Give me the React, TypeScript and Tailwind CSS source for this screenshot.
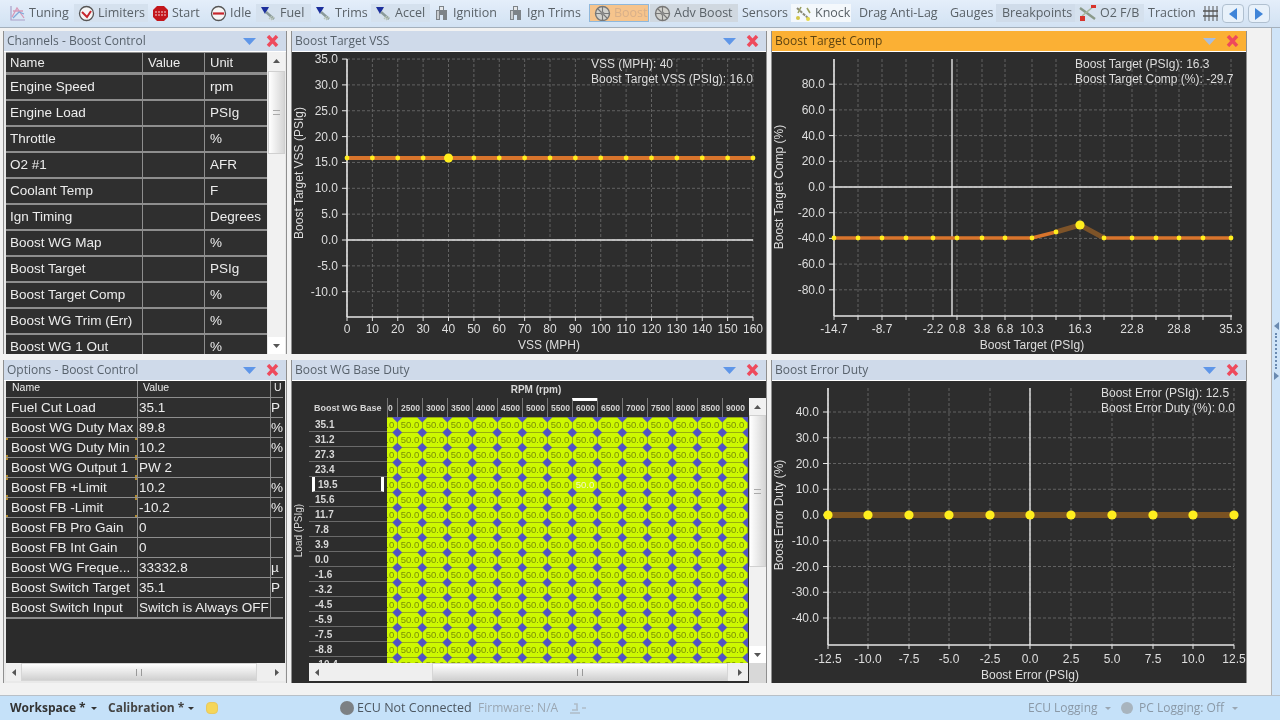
import React from "react";

const sans = "font-['Liberation_Sans',Arial,sans-serif]";
const ui = "font-['Open_Sans','Noto_Sans',sans-serif]";

const Wrench = () => (
  <svg width="17" height="17" viewBox="0 0 17 17">
    <polygon points="1,2 9,2 5,9" fill="#1c2f9c" />
    <path d="M6 7 L14 14" stroke="#8a9a9a" strokeWidth="2.4" />
    <path d="M9 14 L12 11 M11 15 L14 12" stroke="#b8c4b8" strokeWidth="1.2" />
  </svg>
);
const Plug = () => (
  <svg width="16" height="17" viewBox="0 0 16 17">
    <path d="M5 1 H10 V5 H13 V15 H9 V10 H6 V15 H2 V5 H5 Z" fill="#7d8388" />
    <rect x="6" y="2" width="3" height="3" fill="#e6e8ea" />
    <rect x="3" y="6" width="2" height="8" fill="#c8ccd0" />
  </svg>
);
const Turbo = () => (
  <svg width="17" height="17" viewBox="0 0 17 17">
    <circle cx="8.5" cy="8.5" r="7" fill="#d0d0cc" stroke="#777" strokeWidth="1.4" />
    <path d="M8.5 2 V15 M2 8.5 H15 M4 4 L13 13" stroke="#777" strokeWidth="1.1" />
    <circle cx="8.5" cy="8.5" r="2" fill="#888" />
  </svg>
);
const Tuning = () => (
  <svg width="16" height="16" viewBox="0 0 16 16" fill="none">
    <path d="M1 1 V15 H15" stroke="#a9a0c8" strokeWidth="1.2" />
    <path d="M2 12 L7 3 L14 13 M3 6 L13 6" stroke="#d79ab8" strokeWidth="1.3" />
    <path d="M3 13 L9 7 L14 9" stroke="#7fa8d8" strokeWidth="1.3" />
  </svg>
);
const Gauge = () => (
  <svg width="17" height="17" viewBox="0 0 17 17" fill="none">
    <circle cx="8.5" cy="8.5" r="7" fill="#f5f5f5" stroke="#555" strokeWidth="1.3" />
    <path d="M4 7 L9 12 L13 6" stroke="#c7262c" strokeWidth="2" />
  </svg>
);
const Stop = () => (
  <svg width="17" height="17" viewBox="0 0 17 17">
    <polygon points="5,1 12,1 16,5 16,12 12,16 5,16 1,12 1,5" fill="#c3161c" />
    <path d="M3 7 H14 M3 10 H14" stroke="#f4d4d4" strokeWidth="1.2" strokeDasharray="2 1" />
  </svg>
);
const Idle = () => (
  <svg width="17" height="17" viewBox="0 0 17 17" fill="none">
    <circle cx="8.5" cy="8.5" r="7" fill="#f5f5f5" stroke="#555" strokeWidth="1.3" />
    <path d="M3 8.5 H14" stroke="#c7262c" strokeWidth="2.2" />
  </svg>
);
const Knock = () => (
  <svg width="17" height="17" viewBox="0 0 17 17" fill="none">
    <path d="M2 3 L14 14" stroke="#8a8a7a" strokeWidth="2" strokeDasharray="3 1" />
    <path d="M6 2 L3 8 M12 3 L15 8" stroke="#9aa060" strokeWidth="1.6" />
    <circle cx="13" cy="14" r="2" fill="#e4d84a" />
    <circle cx="3" cy="13" r="2" fill="#d4c84a" />
  </svg>
);
const O2Icon = () => (
  <svg width="18" height="18" viewBox="0 0 18 18" fill="none">
    <path d="M1 4 L16 15" stroke="#8a9a8a" strokeWidth="2.4" />
    <path d="M3 12 L15 2" stroke="#a8b8a0" strokeWidth="1.6" />
    <rect x="1" y="12" width="5" height="5" fill="#d8342c" />
    <rect x="12" y="1" width="5" height="3" fill="#d8342c" />
  </svg>
);
const Hatch = () => (
  <svg width="15" height="17" viewBox="0 0 15 17" fill="none" stroke="#555" strokeWidth="1">
    <path d="M2 1 V16 M6 1 V16 M10 1 V16 M14 1 V16" />
    <path d="M0 6 H15 M0 11 H15" strokeWidth="1.4" />
  </svg>
);

type Tool = { t: string; w: number; icon?: React.ReactNode; c?: string; tc?: string };
const tools: Tool[] = [
  { t: "Tuning", w: 68, icon: <Tuning /> },
  { t: "Limiters", w: 74, icon: <Gauge />, c: "bg-[#d5e1ee]" },
  { t: "Start", w: 58, icon: <Stop /> },
  { t: "Idle", w: 50, icon: <Idle /> },
  { t: "Fuel", w: 55, icon: <Wrench />, c: "bg-[#d5e1ee]" },
  { t: "Trims", w: 60, icon: <Wrench /> },
  { t: "Accel", w: 59, icon: <Wrench />, c: "bg-[#d5e1ee]" },
  { t: "Ignition", w: 74, icon: <Plug /> },
  { t: "Ign Trims", w: 85, icon: <Plug /> },
  { t: "Boost", w: 60, icon: <Turbo />, c: "mr-[1px] bg-[#f6c48c] border border-[#8fb8dc]", tc: "text-[#d8b08a]" },
  { t: "Adv Boost", w: 88, icon: <Turbo />, c: "bg-[#d0d8e0]" },
  { t: "Sensors", w: 53 },
  { t: "Knock", w: 60, icon: <Knock />, c: "mr-[4px] bg-[#f4f8fc]" },
  { t: "Drag Anti-Lag", w: 91 },
  { t: "Gauges", w: 50 },
  { t: "Breakpoints", w: 79, c: "bg-[#d0dcea] pl-[6px]" },
  { t: "O2 F/B", w: 69, icon: <O2Icon />, c: "bg-[#d5e1ee]" },
  { t: "Traction", w: 55 },
];

const Toolbar = () => (
  <div className={`h-[28px] flex shrink-0 items-center pl-[6px] bg-gradient-to-b from-[#e4eefa] to-[#d2e2f3] border-b border-[#a4b0bc] ${ui}`}>
    {tools.map((b) => (
      <div
        key={b.t}
        style={{ width: b.w }}
        className={`h-[18px] mt-[-1px] flex items-center gap-[3px] pl-[4px] shrink-0 overflow-hidden whitespace-nowrap text-[12.5px] ${b.c ?? ""} ${b.tc ?? "text-[#5a6268]"}`}
      >
        {b.icon}
        <span>{b.t}</span>
      </div>
    ))}
    <div className="w-[23px] pl-[4px] flex items-center shrink-0"><Hatch /></div>
    <div className="w-[22px] h-[19px] shrink-0 flex items-center justify-center rounded-sm border border-[#b0c0d0] bg-[#e8f1fa]">
      <svg width="8" height="12"><polygon points="8,0 8,12 0,6" fill="#3f84d8" /></svg>
    </div>
    <div className="w-[22px] h-[19px] ml-[4px] shrink-0 flex items-center justify-center rounded-sm border border-[#b0c0d0] bg-[#e8f1fa]">
      <svg width="8" height="12"><polygon points="0,0 0,12 8,6" fill="#3f84d8" /></svg>
    </div>
  </div>
);

const Panel = ({ title, active, children }: { title: string; active?: boolean; children: React.ReactNode }) => (
  <div className="flex flex-col min-w-0 bg-[#e9e9e9] border-l border-r border-[#8f8f8f]">
    <div className={`h-[20px] shrink-0 flex items-center pl-[3px] ${active ? "bg-[#fbb034] text-[#5e4412]" : "bg-[#cfdaea] text-[#58626c]"} ${ui}`}>
      <span className="text-[12px] flex-1 whitespace-nowrap">{title}</span>
      <svg width="13" height="8" className="mr-[10px]">
        <polygon points="0,1 13,1 6.5,8" fill={active ? "#a8bede" : "#5f96e8"} />
      </svg>
      <svg width="13" height="12" className="mr-[7px]" fill="none">
        <path d="M2 1 L11 11 M11 1 L2 11" stroke="#ee4a5c" strokeWidth="3.4" />
      </svg>
    </div>
    <div className="h-px shrink-0 bg-white" />
    <div className="flex-1 min-h-0 relative">{children}</div>
  </div>
);

const VBar = ({ top, height }: { top: number; height: number }) => (
  <div className="w-[17px] h-full shrink-0 flex flex-col bg-[#f1f1f1] items-center">
    <div className="h-[17px] shrink-0 flex items-center justify-center">
      <svg width="7" height="4"><polygon points="0,4 7,4 3.5,0" fill="#555" /></svg>
    </div>
    <div style={{ height: top }} className="shrink-0" />
    <div style={{ height }} className="w-full shrink-0 bg-gradient-to-r from-white to-[#d6d6d6] border border-[#d0d0d0] flex items-center justify-center">
      <div className="w-[7px] h-[5px] border-y border-[#aaa]" />
    </div>
    <div className="flex-1" />
    <div className="h-[17px] w-full shrink-0 flex items-center justify-center bg-white">
      <svg width="7" height="4"><polygon points="0,0 7,0 3.5,4" fill="#555" /></svg>
    </div>
  </div>
);

const HBar = ({ left, width }: { left: number; width: number }) => (
  <div className="h-[18px] w-full flex items-center bg-[#efefef]">
    <div className="w-[15px] shrink-0 flex justify-center">
      <svg width="4" height="7"><polygon points="4,0 4,7 0,3.5" fill="#555" /></svg>
    </div>
    <div style={{ width: left }} className="shrink-0" />
    <div style={{ width }} className="h-full shrink-0 bg-gradient-to-b from-white to-[#d0d0d0] border border-[#d6d6d6] flex items-center justify-center">
      <div className="w-[6px] h-[7px] border-x border-[#999]" />
    </div>
    <div className="flex-1 flex justify-end pr-[6px]">
      <svg width="4" height="7"><polygon points="0,0 0,7 4,3.5" fill="#555" /></svg>
    </div>
  </div>
);

const channels: [string, string][] = [
  ["Engine Speed", "rpm"], ["Engine Load", "PSIg"], ["Throttle", "%"], ["O2 #1", "AFR"], ["Coolant Temp", "F"],
  ["Ign Timing", "Degrees"], ["Boost WG Map", "%"], ["Boost Target", "PSIg"], ["Boost Target Comp", "%"],
  ["Boost WG Trim (Err)", "%"], ["Boost WG 1 Out", "%"],
];

const ChannelsTable = () => (
  <div className={`h-full flex pl-[2px] pr-px overflow-hidden text-[#ececec] text-[13.5px] ${sans}`}>
    <div className="w-[261px] shrink-0 overflow-hidden bg-[#8e8e8e]">
      <div className="h-[19px] mt-px flex gap-px text-[13px] leading-[19px] mb-[3px]">
        <div className="w-[136px] bg-[#2f2f2f] pl-[4px]">Name</div>
        <div className="w-[61px] bg-[#2f2f2f] pl-[5px]">Value</div>
        <div className="w-[62px] bg-[#2f2f2f] pl-[5px]">Unit</div>
      </div>
      {channels.map(([n, u]) => (
        <div key={n} className="h-[24px] mb-[2px] flex gap-px leading-[24px]">
          <div className="w-[136px] bg-[#2f2f2f] pl-[4px] whitespace-nowrap">{n}</div>
          <div className="w-[61px] bg-[#2f2f2f]" />
          <div className="w-[62px] bg-[#2f2f2f] pl-[5px]">{u}</div>
        </div>
      ))}
    </div>
    <div className="ml-[1px]"><VBar top={2} height={83} /></div>
  </div>
);

const options: [string, string, string, boolean?][] = [
  ["Fuel Cut Load", "35.1", "P"], ["Boost WG Duty Max", "89.8", "%"], ["Boost WG Duty Min", "10.2", "%", true],
  ["Boost WG Output 1", "PW 2", "", true], ["Boost FB +Limit", "10.2", "%", true], ["Boost FB -Limit", "-10.2", "%", true],
  ["Boost FB Pro Gain", "0", ""], ["Boost FB Int Gain", "0", ""], ["Boost WG Freque...", "33332.8", "µ"],
  ["Boost Switch Target", "35.1", "P"], ["Boost Switch Input", "Switch is Always OFF", ""],
];

const Corner = ({ c }: { c: string }) => <span className={`absolute w-[2px] h-[2px] bg-[#b08a30] ${c}`} />;

const OptionsTable = () => (
  <div className={`h-full flex flex-col pl-[2px] pr-px text-[#ececec] text-[13.5px] ${sans}`}>
    <div className="flex-1 min-h-0 bg-[#2b2b2b] overflow-hidden">
      <div className="bg-[#8e8e8e] pb-px w-[277px]">
        <div className="h-[16px] flex gap-px text-[10.5px] leading-[13px] mb-px">
          <div className="w-[131px] bg-[#2f2f2f] pl-[6px]">Name</div>
          <div className="w-[132px] bg-[#2f2f2f] pl-[5px]">Value</div>
          <div className="w-[12px] bg-[#2f2f2f] pl-[3px]">U</div>
        </div>
        {options.map(([n, v, u, mark]) => (
          <div key={n} className="h-[19px] mb-px flex gap-px leading-[19px]">
            <div className="w-[131px] bg-[#2f2f2f] pl-[5px] whitespace-nowrap relative">
              {n}
              {mark && (
                <>
                  <Corner c="left-0 top-0" />
                  <Corner c="left-0 bottom-0" />
                  <Corner c="right-0 top-0" />
                  <Corner c="right-0 bottom-0" />
                </>
              )}
            </div>
            <div className="w-[132px] bg-[#2f2f2f] pl-[1px] whitespace-nowrap">{v}</div>
            <div className="w-[12px] bg-[#2f2f2f] overflow-hidden">{u}</div>
          </div>
        ))}
      </div>
    </div>
    <div className="h-[19px] shrink-0 mb-px"><HBar left={0} width={236} /></div>
  </div>
);

type ChartProps = {
  xTicks: { x: number; label?: string }[];
  yTicks: { y: number; label: string }[];
  ax: number; right: number; top: number; bottom: number; zeroY: number; zeroX?: number;
  yLabel: string; yLabelCy: number; yLabelX: number;
  xLabel: string; xLabelCx: number; xLabelY: number; tickY: number;
  info: string[]; infoX: number; infoY: number;
  ox: number; oy: number;
  children: React.ReactNode;
};

const Chart = (p: ChartProps) => (
  <svg width="474" height="302" className={`block bg-[#2d2d2d] ${sans}`} fontSize="12" fill="#dedede">
    <g transform={`translate(${-p.ox},${-p.oy})`}>
      <g stroke="#626262" strokeWidth="1" strokeDasharray="3 2" fill="none">
        {p.xTicks.map((t) => <line key={t.x} x1={t.x} x2={t.x} y1={p.top} y2={p.bottom} />)}
        {p.yTicks.map((t) => <line key={t.y} x1={p.ax} x2={p.right} y1={t.y} y2={t.y} />)}
      </g>
      <g stroke="#e6e6e6" fill="none">
        <line x1={p.ax} x2={p.ax} y1={p.top} y2={p.bottom} strokeWidth="1.6" />
        <line x1={p.ax} x2={p.right} y1={p.bottom} y2={p.bottom} strokeWidth="1.6" />
        <line x1={p.ax} x2={p.right} y1={p.zeroY} y2={p.zeroY} strokeWidth="1.4" />
        {p.zeroX !== undefined && <line x1={p.zeroX} x2={p.zeroX} y1={p.top} y2={p.bottom} strokeWidth="1.4" />}
        {p.xTicks.map((t) => <line key={t.x} x1={t.x} x2={t.x} y1={p.bottom} y2={p.bottom + 4} />)}
        {p.yTicks.map((t) => <line key={t.y} x1={p.ax - 5} x2={p.ax} y1={t.y} y2={t.y} />)}
      </g>
      {p.yTicks.map((t) => (
        <text key={t.y} x={p.ax - 9} y={t.y + 4} textAnchor="end">{t.label}</text>
      ))}
      {p.xTicks.filter((t) => t.label).map((t) => (
        <text key={t.x} x={t.x} y={p.tickY} textAnchor="middle">{t.label}</text>
      ))}
      <text x={p.xLabelCx} y={p.xLabelY} textAnchor="middle">{p.xLabel}</text>
      <text transform={`translate(${p.yLabelX},${p.yLabelCy}) rotate(-90)`} textAnchor="middle">{p.yLabel}</text>
      {p.info.map((s, i) => <text key={s} x={p.infoX} y={p.infoY + i * 15}>{s}</text>)}
      {p.children}
    </g>
  </svg>
);

const Y = "#ffee1e";
const vssX = Array.from({ length: 17 }, (_, i) => 347 + i * 25.375);
const Chart1 = () => (
  <Chart
    ox={292} oy={52} ax={347} right={753} top={59} bottom={317} zeroY={240}
    xTicks={vssX.map((x, i) => ({ x, label: String(i * 10) }))}
    yTicks={[35, 30, 25, 20, 15, 10, 5, 0, -5, -10].map((v) => ({ y: 240 - v * 5.17, label: v.toFixed(1) }))}
    yLabel="Boost Target VSS (PSIg)" yLabelX={303} yLabelCy={173}
    xLabel="VSS (MPH)" xLabelCx={549} xLabelY={349} tickY={333}
    info={["VSS (MPH): 40", "Boost Target VSS (PSIg): 16.0"]} infoX={591} infoY={68}
  >
    <line x1={347} x2={753} y1={158} y2={158} stroke="#d8742c" strokeWidth="4" />
    {vssX.map((x, i) => <circle key={x} cx={x} cy={158} r={i === 4 ? 4.5 : 2.4} fill={Y} />)}
  </Chart>
);

const compX = [834, 858, 882, 906, 933, 957, 982, 1005, 1032, 1056, 1080, 1104, 1132, 1156, 1179, 1203, 1231];
const compL: Record<number, string> = { 834: "-14.7", 882: "-8.7", 933: "-2.2", 957: "0.8", 982: "3.8", 1005: "6.8", 1032: "10.3", 1080: "16.3", 1132: "22.8", 1179: "28.8", 1231: "35.3" };
const Chart2 = () => (
  <Chart
    ox={772} oy={52} ax={834} right={1232} top={59} bottom={316} zeroY={187} zeroX={952}
    xTicks={compX.map((x) => ({ x, label: compL[x] }))}
    yTicks={[80, 60, 40, 20, 0, -20, -40, -60, -80].map((v) => ({ y: 187 - v * 1.285, label: v.toFixed(1) }))}
    yLabel="Boost Target Comp (%)" yLabelX={783} yLabelCy={187}
    xLabel="Boost Target (PSIg)" xLabelCx={1032} xLabelY={349} tickY={333}
    info={["Boost Target (PSIg): 16.3", "Boost Target Comp (%): -29.7"]} infoX={1075} infoY={68}
  >
    <polyline points="834,238 1032,238 1056,232" fill="none" stroke="#d8742c" strokeWidth="3.5" />
    <polyline points="1056,232 1080,225 1104,238" fill="none" stroke="#7d5328" strokeWidth="5" />
    <line x1={1104} x2={1231} y1={238} y2={238} stroke="#d8742c" strokeWidth="3.5" />
    {compX.map((x) => (
      <circle key={x} cx={x} cy={x === 1056 ? 232 : x === 1080 ? 225 : 238} r={x === 1080 ? 4.6 : 2.4} fill={Y} />
    ))}
  </Chart>
);

const errX = [828, 868, 909, 949, 990, 1030, 1071, 1112, 1153, 1193, 1234];
const errL = ["-12.5", "-10.0", "-7.5", "-5.0", "-2.5", "0.0", "2.5", "5.0", "7.5", "10.0", "12.5"];
const Chart3 = () => (
  <Chart
    ox={772} oy={381} ax={828} right={1234} top={388} bottom={645} zeroY={515} zeroX={1030}
    xTicks={errX.map((x, i) => ({ x, label: errL[i] }))}
    yTicks={[40, 30, 20, 10, 0, -10, -20, -30, -40].map((v) => ({ y: 515 - v * 2.575, label: v.toFixed(1) }))}
    yLabel="Boost Error Duty (%)" yLabelX={783} yLabelCy={515}
    xLabel="Boost Error (PSIg)" xLabelCx={1030} xLabelY={679} tickY={663}
    info={["Boost Error (PSIg): 12.5", "Boost Error Duty (%): 0.0"]} infoX={1101} infoY={397}
  >
    <line x1={828} x2={1234} y1={515} y2={515} stroke="#7a5222" strokeWidth="6" />
    {errX.map((x) => <circle key={x} cx={x} cy={515} r={4.6} fill={Y} />)}
  </Chart>
);

const rpm = ["2500", "3000", "3500", "4000", "4500", "5000", "5500", "6000", "6500", "7000", "7500", "8000", "8500", "9000"];
const loads = ["35.1", "31.2", "27.3", "23.4", "19.5", "15.6", "11.7", "7.8", "3.9", "0.0", "-1.6", "-3.2", "-4.5", "-5.9", "-7.5", "-8.8", "-10.4"];
const colIdx = Array.from({ length: 16 }, (_, i) => i);

const DutyTable = () => (
  <div className={`h-full bg-[#2d2d2d] flex flex-col overflow-hidden ${sans}`}>
    <div className="h-[17px] shrink-0 flex justify-center pl-[14px] text-[10px] font-bold text-[#d8d8d8] leading-[17px]">RPM (rpm)</div>
    <div className="flex-1 min-h-0 flex">
      <div className="w-[17px] shrink-0 flex items-center justify-center">
        <span className="block -rotate-90 whitespace-nowrap text-[10px] text-[#d8d8d8] mt-[-20px] ml-[-4px]">Load (PSIg)</span>
      </div>
      <div className="w-[439px] shrink-0 flex flex-col min-h-0">
        <div className="flex-1 min-h-0 overflow-hidden flex flex-col">
          <div className="h-[19px] shrink-0 flex text-[8.5px] font-bold text-[#d4d4d4] leading-[20px]">
            <div className="w-[78px] shrink-0 pl-[5px] whitespace-nowrap text-[9px]">Boost WG Base</div>
            <div className="w-[10px] shrink-0 border-l border-[#777] overflow-hidden">0</div>
            {rpm.map((r) => (
              <div key={r} className={`w-[25px] shrink-0 pl-[3px] border-l border-[#777] ${r === "6000" ? "border-t-[3px] border-t-white leading-[14px]" : ""}`}>{r}</div>
            ))}
          </div>
          <div className="flex-1 min-h-0 overflow-hidden flex">
            <div className="w-[78px] shrink-0">
              {loads.map((l) => (
                <div
                  key={l}
                  className={`h-[15px] text-[10px] font-bold leading-[15px] text-[#d8d8d8] border-b border-[#6a6a6a] ${l === "19.5" ? "mx-[3px] pl-[3px] border-x-[3px] border-x-white" : "pl-[6px]"}`}
                >
                  {l}
                </div>
              ))}
            </div>
            <div className="w-[361px] shrink-0 overflow-hidden bg-[#cdf800]">
              <div className="ml-[-15px] w-[400px]">
                {loads.map((l) => (
                  <div key={l} className="flex h-[15px]">
                    {colIdx.map((c) => (
                      <div
                        key={c}
                        className={`relative w-[25px] h-[15px] shrink-0 border-l border-t border-[#97ad10] text-center text-[9.5px] leading-[14px] ${l === "19.5" && c === 8 ? "text-[#f4f8c8]" : "text-[#7a8e08]"}`}
                      >
                        50.0
                        <span className="absolute left-[-4px] top-[-4px] w-[6.5px] h-[6.5px] rotate-45 bg-[#5252c4]" />
                      </div>
                    ))}
                  </div>
                ))}
              </div>
            </div>
          </div>
        </div>
        <div className="h-[19px] shrink-0 mb-px"><HBar left={108} width={296} /></div>
      </div>
      <div className="w-[18px] shrink-0 flex flex-col pl-px">
        <div className="flex-1 min-h-0"><VBar top={0} height={152} /></div>
        <div className="h-[20px] shrink-0 bg-[#d8d8d8]" />
      </div>
    </div>
  </div>
);

const Caret = ({ c, mr }: { c: string; mr: string }) => (
  <svg width="6" height="3" className={mr}><polygon points="0,0 6,0 3,3" fill={c} /></svg>
);

const StatusBar = () => (
  <div className={`h-[25px] shrink-0 flex items-center bg-[#c5e1f9] border-t border-[#b8c0c8] text-[12px] ${ui}`}>
    <span className="ml-[10px] w-[81px] font-bold text-[#333] whitespace-nowrap">Workspace *</span>
    <Caret c="#333" mr="mr-[11px]" />
    <span className="w-[80px] font-bold text-[#444] whitespace-nowrap">Calibration *</span>
    <Caret c="#333" mr="mr-[12px]" />
    <div className="w-[12px] h-[12px] rounded-sm bg-[#f5d65a] border border-[#e8c860]" />
    <div className="w-[122px]" />
    <div className="w-[14px] h-[14px] rounded-full bg-[#7c8084] mr-[3px]" />
    <span className="w-[121px] text-[#4c5660] whitespace-nowrap text-[12.5px]">ECU Not Connected</span>
    <span className="w-[89px] text-[#9aa6b2] whitespace-nowrap">Firmware: N/A</span>
    <svg width="22" height="14" fill="none"><path d="M3 12 H13 M5 9 H11 M7 3 H10 V9 M15 7 H19" stroke="#aebcc8" strokeWidth="1.6" /></svg>
    <div className="flex-1" />
    <span className="w-[77px] text-[#8a98a6] whitespace-nowrap">ECU Logging</span>
    <Caret c="#9aa6b2" mr="mr-[10px]" />
    <div className="w-[12px] h-[12px] rounded-full bg-[#a8b4be] mr-[6px]" />
    <span className="w-[93px] text-[#8a98a6] whitespace-nowrap">PC Logging: Off</span>
    <Caret c="#9aa6b2" mr="mr-[42px]" />
  </div>
);

export default function App() {
  return (
    <div className="w-[1280px] h-[720px] overflow-hidden flex flex-col bg-[#f1f1f1] blur-[0.4px]">
      <Toolbar />
      <div className="flex-1 min-h-0 flex">
        <div className="w-[1272px] shrink-0 bg-[#f2f2f2] border-r border-[#b4b4b4] flex">
          <div className="pl-[3px] pt-[3px] grid grid-cols-[284px_476px_476px] grid-rows-[323px_323px] gap-x-[4px] gap-y-[6px]">
            <Panel title="Channels - Boost Control"><ChannelsTable /></Panel>
            <Panel title="Boost Target VSS"><Chart1 /></Panel>
            <Panel title="Boost Target Comp" active><Chart2 /></Panel>
            <Panel title="Options - Boost Control"><OptionsTable /></Panel>
            <Panel title="Boost WG Base Duty"><DutyTable /></Panel>
            <Panel title="Boost Error Duty"><Chart3 /></Panel>
          </div>
        </div>
        <div className="flex-1 bg-[#cfe4f8] flex flex-col items-center justify-center gap-[3px] pb-[22px]">
          <svg width="5" height="8"><polygon points="5,0 5,8 0,4" fill="#6a8ab0" /></svg>
          <div className="h-[36px] border-l-2 border-dotted border-[#6a8ab0]" />
          <svg width="5" height="8"><polygon points="0,0 0,8 5,4" fill="#6a8ab0" /></svg>
        </div>
      </div>
      <StatusBar />
    </div>
  );
}
